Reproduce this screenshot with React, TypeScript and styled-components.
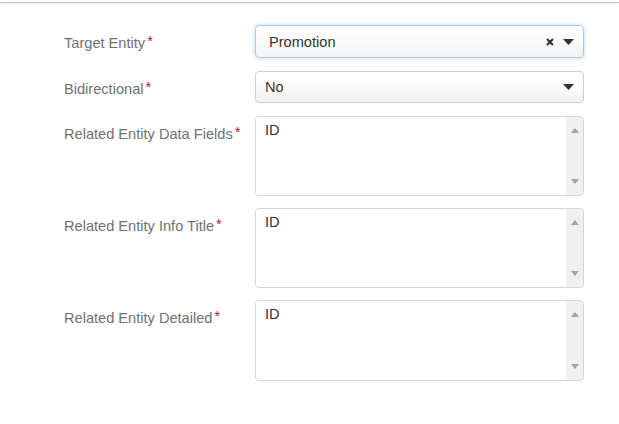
import React from 'react';
import styled, { createGlobalStyle } from 'styled-components';

const GlobalStyle = createGlobalStyle`
  html, body {
    margin: 0;
    padding: 0;
    background: #fff;
    font-family: "Liberation Sans", Arial, sans-serif;
  }
`

const TopBar = styled.div`
  height: 2px;
  border-bottom: 1px solid #c6c6c6;
  box-shadow: 0 1px 3px rgba(0, 0, 0, 0.07);
`

const Form = styled.div`
  padding: 22px 35px 0 64px;
  display: flex;
  flex-direction: column;
`

const Row = styled.div<{ $gap: number }>`
  display: grid;
  grid-template-columns: 191px 1fr;
  margin-bottom: ${p => p.$gap}px;
`

const Label = styled.label`
  padding-top: 8px;
  font-size: 14.6px;
  line-height: 20px;
  color: #717171;
`

const Required = styled.span`
  color: #c8102e;
  margin-left: 2px;
  position: relative;
  top: -2px;
`

const SelectBox = styled.div<{ $focused?: boolean }>`
  height: ${p => (p.$focused ? 31 : 30)}px;
  border: 1px solid ${p => (p.$focused ? '#a9c9e6' : '#cfcfcf')};
  border-radius: 4px;
  background: linear-gradient(#ffffff 20%, #f2f2f2 100%);
  box-shadow: ${p => (p.$focused ? '0 0 4px rgba(102, 175, 233, 0.45)' : 'none')};
  display: flex;
  align-items: center;
  padding: 0 9px 0 ${p => (p.$focused ? 13 : 9)}px;
  font-size: 14.6px;
  color: #333;
`

const SelectValue = styled.span`
  flex: 1;
`

const Clear = styled.span`
  display: flex;
  margin-right: 9px;
`

const Caret = styled.span`
  display: flex;
`

const TextBox = styled.div<{ $height: number }>`
  height: ${p => p.$height}px;
  border: 1px solid #d6d6d6;
  border-radius: 4px;
  display: flex;
  overflow: hidden;
`

const TextValue = styled.div`
  flex: 1;
  padding: 3px 9px;
  font-size: 14.6px;
  line-height: 20px;
  color: #333;
`

const ScrollTrack = styled.div`
  width: 17px;
  background: #f0f0f0;
  display: flex;
  flex-direction: column;
  justify-content: space-between;
  align-items: center;
  padding: 11px 0;
`

const CaretIcon = () => (
  <svg width="11" height="6" viewBox="0 0 11 6">
    <path d="M0 0 H11 L5.5 6 Z" fill="#333" />
  </svg>
)

const ClearIcon = () => (
  <svg width="8" height="8" viewBox="0 0 8 8">
    <path d="M1 1 L7 7 M7 1 L1 7" stroke="#333" strokeWidth="2.2" />
  </svg>
)

const ArrowIcon = ({ up }: { up?: boolean }) => (
  <svg width="8" height="5" viewBox="0 0 8 5">
    <path d={up ? 'M0 5 H8 L4 0 Z' : 'M0 0 H8 L4 5 Z'} fill="#a3a3a3" />
  </svg>
)

const Field = ({ label, children, gap }: { label: string; children: React.ReactNode; gap: number }) => (
  <Row $gap={gap}>
    <Label>
      {label}
      <Required>*</Required>
    </Label>
    <div>{children}</div>
  </Row>
)

const TextArea = ({ value, height }: { value: string; height: number }) => (
  <TextBox $height={height}>
    <TextValue>{value}</TextValue>
    <ScrollTrack>
      <ArrowIcon up />
      <ArrowIcon />
    </ScrollTrack>
  </TextBox>
)

export default function App() {
  return (
    <>
      <GlobalStyle />
      <TopBar />
      <Form>
        <Field label="Target Entity" gap={13}>
          <SelectBox $focused>
            <SelectValue>Promotion</SelectValue>
            <Clear><ClearIcon /></Clear>
            <Caret><CaretIcon /></Caret>
          </SelectBox>
        </Field>
        <Field label="Bidirectional" gap={13}>
          <SelectBox>
            <SelectValue>No</SelectValue>
            <Caret><CaretIcon /></Caret>
          </SelectBox>
        </Field>
        <Field label="Related Entity Data Fields" gap={12}>
          <TextArea value="ID" height={78} />
        </Field>
        <Field label="Related Entity Info Title" gap={12}>
          <TextArea value="ID" height={78} />
        </Field>
        <Field label="Related Entity Detailed" gap={12}>
          <TextArea value="ID" height={79} />
        </Field>
      </Form>
    </>
  )
}
